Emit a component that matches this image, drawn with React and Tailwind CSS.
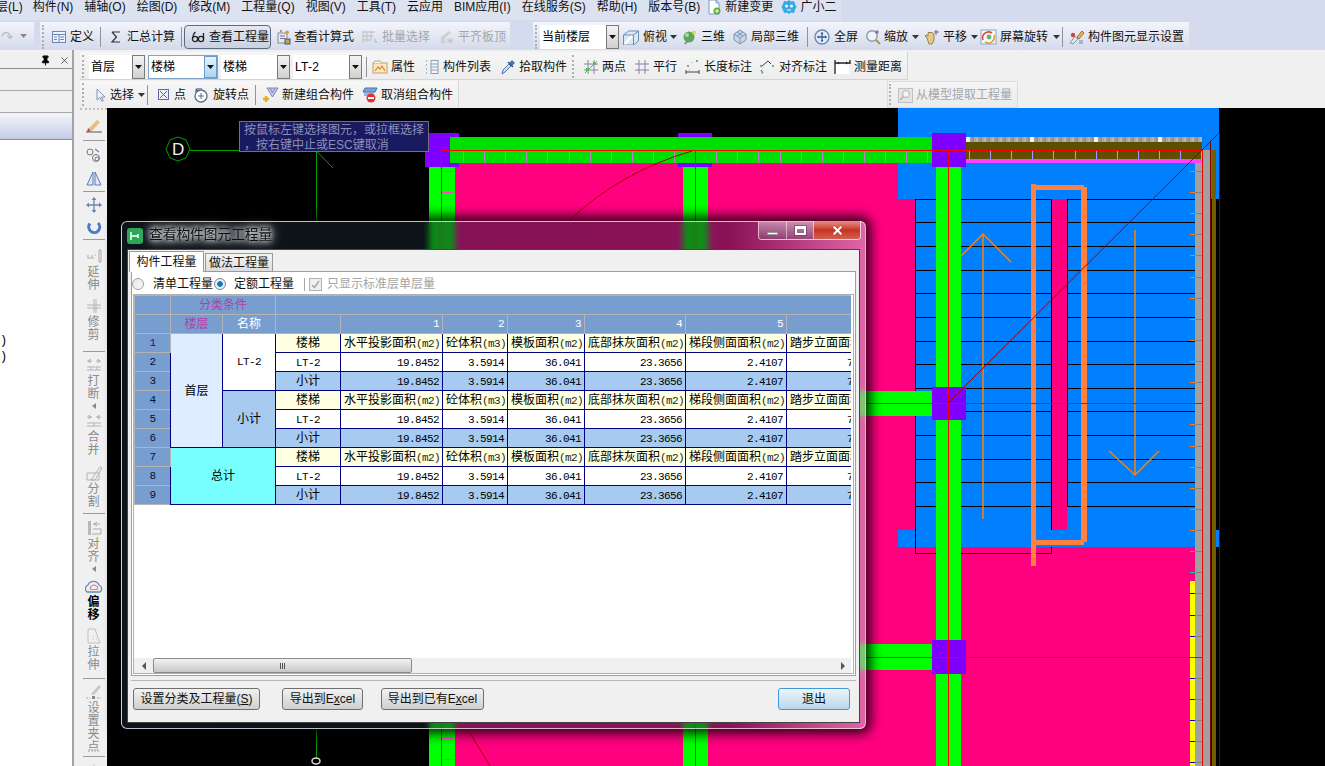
import React from 'react';
import { X, Pin } from 'lucide-react';

const mono = "font-['Liberation_Mono',monospace] text-[11px] tracking-[-0.6px] leading-none";

function Ico({ w = 16, children }) {
  return (
    <svg width={w} height={16} viewBox={`0 0 ${w} 16`} fill="none" className="shrink-0">
      {children}
    </svg>
  );
}

const icons = {
  define: <Ico><rect x="1.5" y="2.5" width="13" height="11" fill="#eef2fa" stroke="#6a86b8" /><path d="M2 5.5h12M8 6v7M9 8h4M9 10.5h4M3 8h3M3 10.5h3" stroke="#6a86b8" /></Ico>,
  sigma: <Ico><path d="M4 3h8M4 3l4.5 5L4 13h8" stroke="#333" strokeWidth="1.2" /></Ico>,
  glasses: <Ico><circle cx="5" cy="10" r="2.6" stroke="#222" strokeWidth="1.3" /><circle cx="11" cy="10" r="2.6" stroke="#222" strokeWidth="1.3" /><path d="M3 9c0-3 1-5 2.5-6M13.5 10V4" stroke="#222" strokeWidth="1.3" /></Ico>,
  calc: <Ico><rect x="3" y="4" width="9" height="10" fill="#e8e8f0" stroke="#889" /><path d="M5 7h5M5 9.5h5" stroke="#778" /><circle cx="12" cy="3.5" r="2" fill="#d9a03a" /><circle cx="6" cy="2" r="1.2" fill="#99a" /><rect x="10" y="10" width="5" height="5" fill="#e0a030" stroke="#2a5aa0" /></Ico>,
  batch: <Ico w={18}><path d="M2 2v12M2 3h12M2 7h10M2 11h8M6 3v10M10 3v8" stroke="#c4c8cc" strokeWidth="1.3" /><path d="M13 8l4 6h-3z" fill="#c8c8c8" /></Ico>,
  level: <Ico w={17}><path d="M3 14V8l8-6 2 2-6 5v5z" fill="#ccd0d0" /><rect x="9" y="9" width="6" height="5" fill="#d6d6d6" /><path d="M10 12h4" stroke="#bbb" /></Ico>,
  box: <Ico w={18}><path d="M1.5 6l5-4h10v10l-5 4h-10z" fill="#dce8f4" stroke="#6f8fb0" /><path d="M1.5 6h10v10M11.5 6l5-4" stroke="#6f8fb0" /><path d="M3 15l7-8" stroke="#fff" strokeWidth="2" /></Ico>,
  three: <Ico><circle cx="7" cy="8" r="5.5" fill="#58a858" /><circle cx="5" cy="6" r="2" fill="#a8dca0" /><path d="M3 15l4-5" stroke="#888" strokeWidth="2" /><circle cx="12" cy="3.5" r="2" fill="#e8d050" /></Ico>,
  partial: <Ico><path d="M8 1l6 4v6l-6 4-6-4V5z" fill="#c8d8ec" stroke="#7f94ad" /><path d="M2 5l6 4 6-4M8 9v6M5 3l6 4M11 3L5 7" stroke="#7f94ad" /></Ico>,
  full: <Ico w={18}><circle cx="9" cy="8" r="7" fill="#e4ecf8" stroke="#7088b0" strokeWidth="1.4" /><path d="M9 3.5v9M4.5 8h9" stroke="#3c5c98" strokeWidth="1.3" /><path d="M9 3l-1.5 2h3zM9 13l-1.5-2h3zM4 8l2-1.5v3zM14 8l-2-1.5v3z" fill="#3c5c98" /></Ico>,
  zoom: <Ico><circle cx="7" cy="7" r="5.2" fill="#f0f4fa" stroke="#8a9ab0" strokeWidth="1.4" /><path d="M11 11l4 4" stroke="#c09040" strokeWidth="2" /><path d="M12 1v4M10 3h4" stroke="#667" /></Ico>,
  hand: <Ico w={17}><path d="M4 9l-2-2 1-1 2 1V4l1-1 1 1 1-1 1 1 1 0 1 2v5l-2 4H6z" fill="#e8c888" stroke="#a08040" /><path d="M13 1v5M11 3h5" stroke="#667" /></Ico>,
  rotate: <Ico w={17}><rect x="1" y="1" width="15" height="14" fill="#f4f8fc" stroke="#7fa8d0" /><path d="M3 11a6 6 0 0 1 9-7" stroke="#e04a30" strokeWidth="1.6" /><path d="M14 6a6 6 0 0 1-9 7" stroke="#e0a030" strokeWidth="1.6" /><circle cx="9" cy="8" r="2.4" fill="#60b860" /></Ico>,
  settings: <Ico w={17}><path d="M2 14l5-7 3 3-5 5z" fill="#dfe4ec" stroke="#8a94a4" /><path d="M9 8l5-6 2 2-5 6z" fill="#e8b060" stroke="#a07030" /><circle cx="5" cy="6" r="2.2" fill="#c84a4a" /><path d="M11 12h4M11 14h4" stroke="#6888b8" /></Ico>,
  attr: <Ico><rect x="1" y="4" width="14" height="10" fill="#f8e8c4" stroke="#c8a060" /><path d="M1 4l2-2h5l2 2" fill="#fff4dc" stroke="#c8a060" /><path d="M3 12l3-4 2 2 2-3 3 5" stroke="#d88838" strokeWidth="1.2" /></Ico>,
  list: <Ico><path d="M2 2h2M2 6h2M2 10h2M2 14h2" stroke="#8aa0bc" strokeWidth="1.6" strokeDasharray="1 1" /><rect x="7" y="1.5" width="7" height="13" fill="#f4f6fa" stroke="#8aa0bc" /><path d="M7 5h7M7 8h7M7 11h7" stroke="#8aa0bc" /></Ico>,
  pick: <Ico><path d="M2 15l1-4 6-6 2 2-6 6z" fill="#cfe0f4" stroke="#4f74a8" /><path d="M9 4l3-3 3 3-3 3z" fill="#4f74a8" /><path d="M8 3l5 5" stroke="#2f548a" strokeWidth="1.3" /></Ico>,
  twoPts: <Ico><path d="M5 1v14M11 1v14M1 5h14M1 11h14" stroke="#8c80a8" /><path d="M2 14L14 2" stroke="#d86868" /><rect x="3" y="9" width="3" height="3" fill="#50c050" /><rect x="10" y="3" width="3" height="3" fill="#50c050" /></Ico>,
  parallel: <Ico><path d="M5 1v14M11 1v14M1 5h14M1 11h14" stroke="#8c80a8" /></Ico>,
  lenDim: <Ico><rect x="11" y="1" width="2" height="2" fill="#60c060" /><rect x="2" y="6" width="2" height="2" fill="#60c060" /><path d="M1 11v4M14 11v4M1 13h13" stroke="#444" /><path d="M7 3v1M4 11h1" stroke="#a8a8a8" /></Ico>,
  alignDim: <Ico w={17}><rect x="1" y="6" width="2" height="2" fill="#60c060" /><rect x="13" y="6" width="2" height="2" fill="#60c060" /><path d="M2 11l2 3M3 7l6-5 3 3" stroke="#444" /><path d="M2 14h2" stroke="#60c060" /></Ico>,
  measure: <Ico w={17}><rect x="2" y="2" width="13" height="13" fill="#fff" /><path d="M1 1v14M16 1v4M1 4h15" stroke="#222" strokeWidth="1.3" /><path d="M3 4l2-1.5v3zM14 4l-2-1.5v3z" fill="#222" /></Ico>,
  cursor: <Ico w={13}><path d="M3 2v11l3-2.5 2 4 1.5-1-2-3.5H11z" fill="#eef2f8" stroke="#8696ac" /></Ico>,
  point: <Ico w={14}><rect x="1.5" y="2.5" width="10" height="10" fill="#eef0fa" stroke="#5c68a8" /><path d="M3 4l7 7M10 4l-7 7" stroke="#a04868" /></Ico>,
  rotPt: <Ico w={17}><circle cx="8" cy="9" r="6" fill="#fff" stroke="#5a6a88" strokeWidth="1.3" /><path d="M8 6v6M5 9h6" stroke="#5a6a88" /><path d="M3 1l3 3-4 1z" fill="#5a6a88" /><path d="M4 1h5v2H4z" fill="#8898b0" /></Ico>,
  newGroup: <Ico w={17}><path d="M5 1h11l-5.5 9z" fill="#c4cce8" stroke="#7b86c0" /><path d="M8 1l2.500 5L13 1" stroke="#7b86c0" /><path d="M4 9v6M1 12h6" stroke="#e0b020" strokeWidth="2.400" /></Ico>,
  cancelGroup: <Ico><path d="M3 1h12l-2 4H1z" fill="#7aa4d8" stroke="#4a74b0" /><path d="M2 6h10M2 8h7" stroke="#7aa4d8" strokeWidth="1.500" /><circle cx="9" cy="11" r="4.500" fill="#e03030" /><rect x="6" y="10" width="6" height="2" fill="#fff" /></Ico>,
  modelPick: <Ico><rect x="1.500" y="1.500" width="14" height="14" fill="#e4e4e4" stroke="#c0c0c0" /><circle cx="9" cy="7" r="3.500" fill="#f4f4f4" stroke="#b0b0b0" /><path d="M6.500 9.500L3 13" stroke="#b0b0b0" strokeWidth="1.500" /></Ico>,
  change: <Ico><path d="M3 1h7l3 3v11H3z" fill="#fff" stroke="#7f9cc0" /><path d="M10 1v3h3" stroke="#7f9cc0" /><circle cx="11" cy="12" r="3.500" fill="#58b038" /><path d="M9 12h4M11 10v4" stroke="#fff" /></Ico>,
  face: <Ico><path d="M8 1l2 1.500 3-.5 1 3 1.500 3-1.500 3-1 3-3-.5-2 1.500-2-1.500-3 .5-1-3L.5 8 2 5l1-3 3 .5z" fill="#34a8e8" /><circle cx="5.500" cy="7" r="1.500" fill="#fff" /><circle cx="10.500" cy="7" r="1.500" fill="#fff" /><path d="M6 11h4" stroke="#fff" /></Ico>,
};

function Caret({ className = '', color = '#333' }) {
  return (
    <svg width="7" height="4" viewBox="0 0 7 4" className={`shrink-0 ${className}`}>
      <path d="M0 0h7L3.500 4z" fill={color} />
    </svg>
  );
}

function Sep({ className = '' }) {
  return <div className={`w-px h-[20px] bg-[#8c929e] shrink-0 ${className}`} />;
}

function Grip({ className = '' }) {
  return <div className={`h-full border-l-2 border-dotted border-[#b0b0b0] shrink-0 ${className}`} />;
}

function Tool({ icon, label, className = '', muted }) {
  return (
    <div className={`flex items-center gap-[3px] shrink-0 ${muted ? 'text-[#a2a6ac]' : 'text-[#111]'} ${className}`}>
      {icon}
      <span className="whitespace-nowrap">{label}</span>
    </div>
  );
}

function Select({ value, className = '', focus, mono: isMono }) {
  return (
    <div className={`flex h-[24px] bg-white shrink-0 ${focus ? 'border border-[#7fa4c8]' : ''} ${className}`}>
      <span className={`flex-1 pl-[2px] whitespace-nowrap overflow-hidden ${focus ? 'leading-[22px]' : 'leading-[24px]'} ${isMono ? 'tracking-[0.3px]' : ''}`}>{value}</span>
      <div className={`w-[13px] flex items-center justify-center border ${focus ? 'border-[#6f9cc8] bg-gradient-to-b from-[#e4f3fc] to-[#a9d6f0]' : 'border-[#7a7a7a] bg-gradient-to-b from-[#f4f4f4] to-[#d0d0d0]'}`}>
        <Caret color="#111" />
      </div>
    </div>
  );
}

function VTool({ icon, label, muted, bold, caret, className = '' }) {
  return (
    <div className={`flex flex-col items-center shrink-0 ${className}`}>
      {icon}
      {label && (
        <div className={`w-3 mt-[2px] leading-[13px] text-center break-all ${muted ? 'text-[#8a8a8a]' : 'text-black'} ${bold ? 'font-bold' : ''}`}>
          {label}
        </div>
      )}
      {caret && <div className="mt-[2px] border-y-[3px] border-y-transparent border-r-[4px] border-r-[#888]" />}
    </div>
  );
}

function VSep({ className = '' }) {
  return <div className={`w-[22px] h-px bg-[#9a9a9a] shrink-0 ${className}`} />;
}

function Menu() {
  const items = ['构件(N)', '辅轴(O)', '绘图(D)', '修改(M)', '工程量(Q)', '视图(V)', '工具(T)', '云应用', 'BIM应用(I)', '在线服务(S)', '帮助(H)', '版本号(B)'];
  return (
    <div className="h-[22px] bg-[#d5dbee] flex items-start shrink-0">
      <div className="h-[20px] w-[841px] flex items-center pb-[6px] bg-[#dde2f1] text-[#111] shrink-0">
        <span className="-ml-[16px] mr-[10px] whitespace-nowrap">楼层(L)</span>
        <div className="flex gap-[11px]">
          {items.map((m) => <span key={m} className="whitespace-nowrap">{m}</span>)}
        </div>
        <Tool icon={icons.change} label="新建变更" className="ml-[6px]" />
        <Tool icon={icons.face} label="广小二" className="ml-[8px]" />
      </div>
    </div>
  );
}

function Row1() {
  const bar = 'h-[28px] flex items-center bg-gradient-to-b from-[#f3f5fb] to-[#d4daeb] shrink-0';
  return (
    <div className="h-[28px] bg-[#d5dbee] flex shrink-0 border-b-0">
      <div className={`${bar} w-[34px] pl-[1px] gap-[4px]`}>
        <span className="text-[#b8bcc4] text-[15px] leading-none w-[15px]">↷</span>
        <Caret color="#888" />
      </div>
      <div className={`${bar} w-[470px] ml-[6px] pt-[3px] pb-px`}>
        <Grip className="ml-[2px]" />
        <Tool icon={icons.define} label="定义" className="ml-[7px]" />
        <Sep className="ml-[6px]" />
        <Tool icon={icons.sigma} label="汇总计算" className="ml-[7px]" />
        <Sep className="ml-[6px]" />
        <Tool icon={icons.glasses} label="查看工程量" className="ml-[2px] h-[24px] w-[87px] pl-[5px] gap-[2px] border border-[#5a6a80] rounded-[4px] bg-gradient-to-b from-[#e4e8f2] to-[#c9d0e0]" />
        <Tool icon={icons.calc} label="查看计算式" className="ml-[4px]" />
        <Tool icon={icons.batch} label="批量选择" className="ml-[7px] gap-[1px]" muted />
        <Tool icon={icons.level} label="平齐板顶" className="ml-[8px]" muted />
      </div>
      <div className={`${bar} w-[656px] ml-[23px] pt-[3px] pb-px`}>
        <Grip className="ml-[2px]" />
        <Select value="当前楼层" className="ml-[3px] w-[79px]" />
        <Tool icon={icons.box} label="俯视" className="ml-[3px]" />
        <Caret className="ml-[3px]" />
        <Tool icon={icons.three} label="三维" className="ml-[5px]" />
        <Tool icon={icons.partial} label="局部三维" className="ml-[7px]" />
        <Sep className="ml-[8px]" />
        <Tool icon={icons.full} label="全屏" className="ml-[5px]" />
        <Tool icon={icons.zoom} label="缩放" className="ml-[7px]" />
        <Caret className="ml-[4px]" />
        <Tool icon={icons.hand} label="平移" className="ml-[4px]" />
        <Caret className="ml-[4px]" />
        <Tool icon={icons.rotate} label="屏幕旋转" className="ml-[2px]" />
        <Caret className="ml-[5px]" />
        <Sep className="ml-[2px]" />
        <Tool icon={icons.settings} label="构件图元显示设置" className="ml-[5px]" />
      </div>
    </div>
  );
}

function Row2() {
  return (
    <div className="h-[28px] w-[828px] flex items-center pt-[3px] pb-px bg-gradient-to-b from-[#f6f6f6] to-[#ededed] border-b border-r border-[#d4d4d4] shrink-0">
      <Grip className="ml-[2px]" />
      <Select value="首层" className="ml-[5px] w-[56px]" />
      <Select value="楼梯" className="ml-[3px] w-[70px]" focus />
      <Select value="楼梯" className="ml-[3px] w-[69px]" />
      <Select value="LT-2" className="ml-[3px] w-[69px]" mono />
      <Sep className="ml-[4px]" />
      <Tool icon={icons.attr} label="属性" className="ml-[5px]" />
      <Tool icon={icons.list} label="构件列表" className="ml-[9px]" />
      <Tool icon={icons.pick} label="拾取构件" className="ml-[9px]" />
      <Grip className="ml-[5px]" />
      <Tool icon={icons.twoPts} label="两点" className="ml-[9px]" />
      <Tool icon={icons.parallel} label="平行" className="ml-[8px]" />
      <Tool icon={icons.lenDim} label="长度标注" className="ml-[8px]" />
      <Tool icon={icons.alignDim} label="对齐标注" className="ml-[7px]" />
      <Tool icon={icons.measure} label="测量距离" className="ml-[7px]" />
    </div>
  );
}

function Row3() {
  return (
    <div className="h-[27px] flex shrink-0">
      <div className="w-[379px] flex items-center py-[2px] bg-gradient-to-b from-[#f6f6f6] to-[#ededed] border-r border-[#d8d8d8]">
        <Grip className="ml-[2px]" />
        <Tool icon={icons.cursor} label="选择" className="ml-[10px]" />
        <Caret className="ml-[4px]" />
        <Sep className="ml-[2px]" />
        <Tool icon={icons.point} label="点" className="ml-[9px]" />
        <Tool icon={icons.rotPt} label="旋转点" className="ml-[7px]" />
        <Sep className="ml-[6px]" />
        <Tool icon={icons.newGroup} label="新建组合构件" className="ml-[6px]" />
        <Tool icon={icons.cancelGroup} label="取消组合构件" className="ml-[8px]" />
      </div>
      <div className="w-[131px] ml-[428px] flex items-center py-[2px] bg-gradient-to-b from-[#f4f4f4] to-[#ebebeb] border border-[#dcdcdc]">
        <Grip className="ml-[1px]" />
        <Tool icon={icons.modelPick} label="从模型提取工程量" className="ml-[6px]" muted />
      </div>
    </div>
  );
}

function LeftPanel() {
  return (
    <div className="w-[74px] shrink-0 flex flex-col border-r-2 border-[#a0a4a8] bg-[#f0f0f0] pt-[3px]">
      <div className="h-[16px] flex items-center justify-end gap-[8px] pr-[2px] border-b border-[#8a8a8a]">
        <Pin size={11} strokeWidth={2} className="text-black" fill="black" />
        <X size={11} strokeWidth={1.300} className="text-black" />
      </div>
      <div className="h-[22px] border-b border-[#a8a8a8]" />
      <div className="h-[22px] border-b border-[#a8a8a8]" />
      <div className="h-[26px] mt-px bg-gradient-to-b from-[#f2f4fa] to-[#c4cce4] border-b border-[#8a8e96]" />
      <div className="flex-1 bg-white pt-[193px] font-['Liberation_Mono',monospace] text-[12px] leading-[16px] text-black">
        <div>)</div>
        <div>)</div>
      </div>
    </div>
  );
}

function VerticalBar() {
  const g = (cls, body) => <svg width="18" height="16" viewBox="0 0 18 16" fill="none" className={`shrink-0 ${cls}`}>{body}</svg>;
  return (
    <div className="w-[27px] shrink-0 flex flex-col items-center bg-[#f0f0f0] overflow-hidden text-xs border-t-2 border-dotted border-t-[#c0c0c0]">
      <VTool className="mt-[7px]" icon={g('', <><path d="M3 12l9-9 3 2-8 9z" fill="#e8c070" /><path d="M3 11l3 3-4 1z" fill="#b84878" /><path d="M1 15h16" stroke="#555" /></>)} />
      <VSep className="mt-[7px]" />
      <VTool className="mt-[6px]" icon={g('', <><circle cx="5" cy="5" r="3" stroke="#778" /><circle cx="11" cy="11" r="3.500" stroke="#778" /><circle cx="12" cy="12" r="2" stroke="#778" /><path d="M10 2l4 3" stroke="#6a88c0" strokeWidth="1.300" /></>)} />
      <VTool className="mt-[7px]" icon={g('', <><path d="M8 2v13L2 15zM10 2v13l6 0z" fill="#dce6f6" stroke="#5c7cb0" /></>)} />
      <VSep className="mt-[5px]" />
      <VTool className="mt-[5px]" icon={g('', <><path d="M9 1v14M2 8h14" stroke="#6a88a8" strokeWidth="1.300" /><path d="M9 0l-2.500 3h5zM9 16l-2.500-3h5zM1 8l3-2.500v5zM17 8l-3-2.500v5z" fill="#6a88a8" /></>)} />
      <VTool className="mt-[5px]" icon={g('', <path d="M13 5a5.500 5.500 0 1 1-8 .5" stroke="#4a7ac8" strokeWidth="3" />)} />
      <VSep className="mt-[5px]" />
      <VTool className="mt-[8px]" muted label="延伸" icon={g('', <path d="M2 8h2M6 8h2M2 10h7M10 7h1M14 2v12M16 2v12M14 2h2M14 14h2" stroke="#aaa" />)} />
      <VTool className="mt-[6px]" muted label="修剪" icon={g('', <path d="M2 7h14M2 10h14M9 1v14M11 1v14" stroke="#b4b4b4" />)} />
      <VSep className="mt-[9px]" />
      <VTool className="mt-[5px]" muted label="打断" caret icon={g('', <path d="M2 4h5M11 4h5M2 10h14M2 13h14M6 10v3M12 10v3M3 4l2-2v4zM15 4l-2-2v4z" stroke="#b4b4b4" />)} />
      <VTool className="mt-[4px]" muted label="合并" icon={g('', <path d="M2 4h5M11 4h5M2 10h14M2 13h14M9 10v3M6 4L4 2v4zM12 4l2-2v4z" stroke="#b4b4b4" />)} />
      <VTool className="mt-[8px]" muted label="分割" icon={g('', <path d="M2 8h12v7H2zM6 15l9-13 2 1-7 12z" stroke="#b4b4b4" />)} />
      <VSep className="mt-[4px]" />
      <VTool className="mt-[6px]" muted label="对齐" caret icon={g('', <><rect x="3" y="1" width="3" height="14" fill="#b8b8b8" /><path d="M8 4h7M8 9h8v5H7M12 2l-3 2 3 2" stroke="#aaa" /></>)} />
      <VTool className="mt-[6px]" bold label="偏移" icon={g('', <><path d="M2 14a4 4 0 0 1 1-7 6 6 0 0 1 11 0 4 4 0 0 1 1 7z" stroke="#5c8cc0" strokeWidth="1.300" /><path d="M6 11.500a2 2 0 0 1 1-3.500 2.500 2.500 0 0 1 4 0 2 2 0 0 1 1 3.500z" stroke="#e08080" strokeWidth="1.200" /></>)} />
      <VTool className="mt-[6px]" muted label="拉伸" icon={g('', <path d="M3 1h7l5 14H3zM8 8h1M8 11h1M11 11h1" stroke="#c0c0c0" />)} />
      <VSep className="mt-[6px]" />
      <VTool className="mt-[5px]" muted label="设置夹点" icon={g('', <><path d="M6 10l8-9 2 2-7 8z" fill="#c8c8c8" /><path d="M1 14h4M12 14h4" stroke="#aaa" strokeDasharray="2 1" /><rect x="7" y="12" width="3" height="3" fill="#888" /></>)} />
      <VSep className="mt-[2px]" />
      <VTool className="mt-[5px]" icon={g('', <path d="M2 8h14M9 2v12" stroke="#c8c8c8" strokeDasharray="2 1" />)} />
    </div>
  );
}

function Canvas() {
  const ticks = Array.from({ length: 29 }, (_, k) => 171 + k * 21.120);
  const beam = Array.from({ length: 23 }, (_, k) => 463 + k * 21.100);
  const strip = Array.from({ length: 12 }, (_, k) => 969 + k * 21.100);
  const speck = Array.from({ length: 118 }, (_, k) => 966 + k * 2);
  const stairs = [199, 222, 246, 270, 293, 317, 341, 364, 388, 411, 435, 459, 482, 506];
  const shades = ['#b0a8a0', '#989084', '#c0bcb8', '#a49c90', '#8c8478', '#b8b4ac', '#a89f94'];
  return (
    <div className="relative w-[1218px] h-[658px] bg-black shrink-0">
      <svg className="block" width="1218" height="658" viewBox="107 108 1218 658" shapeRendering="crispEdges">
        <rect x="898" y="108" width="321" height="91" fill="#0080ff" />
        <rect x="455" y="163" width="460" height="603" fill="#ff007f" />
        <rect x="915" y="547" width="280" height="219" fill="#ff007f" />
        <rect x="915" y="199" width="280" height="348" fill="#0080ff" />
        <rect x="898" y="530" width="17" height="17" fill="#0080ff" />
        <rect x="1216" y="530" width="3" height="17" fill="#0080ff" />
        <rect x="898" y="163" width="17" height="36" fill="#0080ff" />
        <rect x="1051" y="199" width="16" height="331" fill="#ff007f" />

        {/* stair treads */}
        {stairs.map((y) => (
          <g key={y} stroke="#000">
            <path d={`M915 ${y + 0.500}H1051`} />
            <path d={`M1067 ${y + 0.500}H1195`} />
          </g>
        ))}
        <path d="M915.500 199V553.500H1051.500V547M1051.500 530V199M1067.500 199V506" stroke="#000" fill="none" />

        {/* stair outline and arrows */}
        <g fill="#ff8040">
          <rect x="1031" y="184" width="5" height="382" />
          <rect x="1081" y="187" width="6" height="355" />
          <rect x="1036" y="185" width="48" height="5" />
          <rect x="1036" y="540" width="48" height="5" />
        </g>
        <g stroke="#ff8000" fill="none" strokeWidth="1.500" shapeRendering="auto">
          <path d="M983 235V519M961 256L983 234L1011 262" />
          <path d="M1135 230V475M1109 451L1135 475L1159 451" />
        </g>

        {/* columns */}
        <rect x="429" y="167" width="26" height="599" fill="#00ff00" />
        <rect x="683" y="163" width="25" height="603" fill="#00ff00" />
        <rect x="936" y="167" width="25" height="599" fill="#00ff00" />
        <rect x="708" y="391" width="228" height="25" fill="#00ff00" />
        <rect x="708" y="644" width="228" height="26" fill="#00ff00" />

        {/* top beam */}
        <rect x="429" y="133" width="30" height="34" fill="#8000ff" />
        <rect x="425" y="150" width="34" height="17" fill="#8000ff" />
        <rect x="678" y="133" width="34" height="34" fill="#8000ff" />
        <rect x="450" y="137" width="482" height="26" fill="#00e000" />
        {beam.map((x) => <rect key={x} x={x} y="150" width="1" height="13" fill="#c080c0" />)}
        <rect x="966" y="142" width="236" height="17" fill="#5c5000" />
        <rect x="966" y="159" width="236" height="4" fill="#ff40ff" />
        {speck.map((x, k) => <rect key={x} x={x} y="137" width="2" height="5" fill={k % 32 < 2 ? '#f0f0f0' : shades[(k * 5 + (k >> 2)) % 7]} />)}
        {strip.map((x) => <rect key={x} x={x} y="150" width="1" height="9" fill="#a0a0ff" />)}
        <rect x="932" y="133" width="34" height="34" fill="#8000ff" />
        <rect x="932" y="387" width="34" height="33" fill="#8000ff" />
        <rect x="932" y="640" width="34" height="34" fill="#8000ff" />

        {/* right edge strips */}
        <rect x="1195" y="163" width="15" height="603" fill="#a0a0a0" />
        <rect x="1202" y="150" width="8" height="13" fill="#a0a0a0" />
        <rect x="1212" y="150" width="4" height="616" fill="#706000" />
        <rect x="1190" y="581" width="5" height="185" fill="#ffff00" />
        {ticks.map((y, k) => (
          <g key={y}>
            <rect x="1190" y={Math.round(y)} width="5" height="1" fill={k < 18 ? '#ff8000' : k < 20 ? '#00e0a0' : '#0000c0'} />
            <rect x="1195" y={Math.round(y)} width="7" height="1" fill="#808080" />
          </g>
        ))}

        {/* axis lines */}
        <g stroke="#ff0000" fill="none">
          <path d="M441 150.500H1203M450 403.500H1203M708 657.500H1203" />
          <path d="M441.500 150V766M695.500 150V766M948.500 150V766M1202.500 150V766" />
        </g>
        {[0, 1, 2, 27, 28].map((k) => (
          <g key={k} fill="#ff40c0">
            <rect x="442" y={171 + k * 21} width="12" height="1" />
          </g>
        ))}
        <path d="M1210.500 141V766M1219.500 133V766" stroke="#800000" />
        <path d="M948 403L1219 133" stroke="#a00000" shapeRendering="auto" />
        <path d="M570 220Q620 172 692 151" stroke="#a00000" fill="none" shapeRendering="auto" />
        <path d="M470 733L490 766" stroke="#a00000" shapeRendering="auto" />

        {/* axis bubble D */}
        <g stroke="#00a000" fill="none" shapeRendering="auto">
          <path d="M178 137L186 140L190 149L186 158L178 161L170 158L166 149L170 140Z" />
          <path d="M190 150.500H239M316.500 151V222M316.500 151L333 168M316.500 729V757" />
        </g>
        <ellipse cx="316" cy="761" rx="4" ry="3" fill="none" stroke="#ddd" strokeWidth="1.500" shapeRendering="auto" />
        <text x="172" y="155" fill="#eee" fontSize="17" fontFamily="Liberation Sans">D</text>
      </svg>
      <div className="absolute left-[132px] top-[13px] w-[190px] h-[31px] bg-[#1a1a60] border border-[#707084] pl-[4px] pt-px text-[#8f8fb4] leading-[15px] whitespace-nowrap">
        <div>按鼠标左键选择图元，或拉框选择</div>
        <div>，按右键中止或ESC键取消</div>
      </div>
    </div>
  );
}

const cols = ['w-[36px]', 'w-[52px]', 'w-[53px]', 'w-[65px]', 'w-[102px]', 'w-[65px]', 'w-[77px]', 'w-[101px]', 'w-[101px]', 'w-[100px]'];
const labels = ['水平投影面积', '砼体积', '模板面积', '底部抹灰面积', '梯段侧面面积', '踏步立面面积'];
const units = ['(m2)', '(m3)', '(m2)', '(m2)', '(m2)', '(m2)'];
const values = ['19.8452', '3.5914', '36.041', '23.3656', '2.4107', '7.2321'];

function GridRow({ i }) {
  const kind = i % 3;
  const bg = kind === 0 ? 'bg-[#ffffe1]' : kind === 1 ? 'bg-white' : 'bg-[#a6caf0]';
  const cell = 'border border-[#000080] p-0 overflow-hidden whitespace-nowrap';
  return (
    <tr className="h-[19px]">
      <td className={`border border-[#b4b4b4] bg-[#789ed0] text-center ${mono} ${i === 0 ? 'text-[#400080]' : 'text-[#001040]'}`}>{i + 1}</td>
      {i === 0 && <td rowSpan={6} className={`${cell} bg-[#deedff] text-center`}>首层</td>}
      {i === 6 && <td rowSpan={3} colSpan={2} className={`${cell} bg-[#77ffff] text-center`}>总计</td>}
      {i === 0 && <td rowSpan={3} className={`${cell} bg-white text-center ${mono}`}>LT-2</td>}
      {i === 3 && <td rowSpan={3} className={`${cell} bg-[#a6caf0] text-center`}>小计</td>}
      <td className={`${cell} ${bg} text-center`}>
        {kind === 0 ? '楼梯' : kind === 1 ? <span className={mono}>LT-2</span> : '小计'}
      </td>
      {values.map((v, c) => (
        <td key={c} className={`${cell} ${bg} ${kind === 0 ? 'pl-[3px] text-left' : 'pr-[3px] text-right'}`}>
          {kind === 0 ? <>{labels[c]}<span className={`${mono} text-[#222]`}>{units[c]}</span></> : <span className={mono}>{v}</span>}
        </td>
      ))}
    </tr>
  );
}

function Grid() {
  const hd = 'border border-[#b4b4b4] bg-[#789ed0] p-0';
  return (
    <div className="w-[717px] h-[363px] overflow-hidden bg-white">
      <table className="table-fixed border-collapse w-[752px] text-xs leading-[14px] text-black">
        <colgroup>{cols.map((c, k) => <col key={k} className={c} />)}</colgroup>
        <tbody>
          <tr className="h-[19px]">
            <td className={hd} />
            <td colSpan={2} className={`${hd} text-center text-[#b040a8]`}>分类条件</td>
            <td colSpan={7} className={hd} />
          </tr>
          <tr className="h-[19px]">
            <td className={hd} />
            <td className={`${hd} text-center text-[#b040a8]`}>楼层</td>
            <td className={`${hd} text-center text-white`}>名称</td>
            <td className={hd} />
            {[1, 2, 3, 4, 5, 6].map((n) => <td key={n} className={`${hd} text-right pr-[3px] text-white ${mono}`}>{n}</td>)}
          </tr>
          {Array.from({ length: 9 }, (_, i) => <GridRow key={i} i={i} />)}
        </tbody>
      </table>
    </div>
  );
}

function Scrollbar() {
  return (
    <div className="h-[15px] w-[717px] flex items-center bg-[#f0f0f0]">
      <div className="w-[19px] flex justify-center"><div className="border-y-[4px] border-y-transparent border-r-[4px] border-r-[#555]" /></div>
      <div className="w-[259px] h-[15px] flex items-center justify-center gap-px rounded-[2px] border border-[#8a8a8a] bg-gradient-to-b from-[#f2f2f2] to-[#c8c8c8]">
        <i className="w-px h-[6px] bg-[#555]" /><i className="w-px h-[6px] bg-[#555]" /><i className="w-px h-[6px] bg-[#555]" />
      </div>
      <div className="flex-1" />
      <div className="w-[16px] flex justify-center"><div className="border-y-[4px] border-y-transparent border-l-[4px] border-l-[#555]" /></div>
    </div>
  );
}

function DlgButton({ className = '', children, primary }) {
  return (
    <div className={`h-[22px] flex items-center justify-center shrink-0 rounded-[3px] border text-[#111] ${primary ? 'border-[#3c9ad8] bg-gradient-to-b from-[#ecf6fc] to-[#bcd6e8]' : 'border-[#707070] bg-gradient-to-b from-[#f2f2f2] to-[#cfcfcf]'} ${className}`}>
      {children}
    </div>
  );
}

function Dialog() {
  return (
    <div className="absolute left-[121px] top-[221px] w-[745px] h-[508px] rounded-[6px] border border-[#e8e8e8]/80 px-[5px] pb-[5px] flex flex-col backdrop-blur-[3px] bg-[linear-gradient(90deg,rgba(24,36,48,0.55),rgba(24,36,48,0.5)_82%,rgba(205,170,195,0.6))] shadow-[0_0_12px_5px_rgba(0,0,0,0.8)] text-xs">
      <div className="h-[27px] flex items-center shrink-0 relative">
        <div className="w-[16px] h-[16px] rounded-[3px] bg-[#2aa858] flex items-center justify-center">
          <svg width="12" height="12" viewBox="0 0 12 12"><path d="M2 2v8M2 6h7M9 4v4" stroke="#fff" strokeWidth="1.500" fill="none" /></svg>
        </div>
        <span className="ml-[6px] text-[13.700px] text-[#111] [text-shadow:0_0_5px_#fff,0_0_9px_#fff,0_0_13px_rgba(255,255,255,0.9)]">查看构件图元工程量</span>
        <div className="absolute -right-[1px] -top-px h-[19px] w-[103px] flex rounded-b-[4px] border border-t-0 border-white/70 overflow-hidden">
          <div className="w-[28px] flex items-center justify-center bg-gradient-to-b from-[#d8b8cc]/70 to-[#804870]/60 border-r border-white/50">
            <div className="w-[11px] h-[3px] mt-[6px] bg-white border border-[#333]/50" />
          </div>
          <div className="w-[27px] flex items-center justify-center bg-gradient-to-b from-[#d8b8cc]/70 to-[#804870]/60 border-r border-white/50">
            <div className="w-[11px] h-[9px] border-2 border-t-[3px] border-white outline outline-[#333]/40" />
          </div>
          <div className="flex-1 flex items-center justify-center bg-gradient-to-b from-[#e49088] via-[#c83020] to-[#d06050]">
            <X size={13} strokeWidth={3.500} className="text-white" />
          </div>
        </div>
      </div>
      <div className="flex-1 flex flex-col bg-[#f0f0f0] border border-[#444] px-[3px] min-h-0 relative">
        <div className="h-[22px] flex items-end shrink-0 relative z-10 -mb-px -ml-[2px]">
          <div className="w-[75px] h-[21px] bg-white border border-b-0 border-[#999] text-center leading-[20px] text-[#111]">构件工程量</div>
          <div className="w-[68px] h-[19px] ml-px bg-gradient-to-b from-[#f4f4f4] to-[#dcdcdc] border border-[#999] text-center leading-[19px] text-[#111]">做法工程量</div>
        </div>
        <div className="h-[405px] bg-white border border-[#a0a0a0] shrink-0 flex flex-col pt-[3px]">
          <div className="h-[18px] flex items-center shrink-0 text-[#111]">
            <div className="w-[12px] h-[12px] rounded-full border border-[#a0a0a0] bg-gradient-to-br from-[#e8e8e8] to-[#fafafa]" />
            <span className="ml-[9px] leading-none whitespace-nowrap">清单工程量</span>
            <div className="w-[12px] h-[12px] ml-[1px] rounded-full border border-[#808890] bg-[radial-gradient(circle,#0a78c8_35%,#e8f0f4_45%)]" />
            <span className="ml-[8px] whitespace-nowrap">定额工程量</span>
            <div className="ml-[10px] w-px h-[13px] bg-[#a8a8a8]" />
            <div className="ml-[4px] w-[13px] h-[13px] border border-[#b0b0b0] bg-[#f0f0f0] flex items-center justify-center">
              <svg width="9" height="9" viewBox="0 0 9 9"><path d="M1 5l2.500 2.500L8 1" stroke="#a8a8a8" strokeWidth="1.500" fill="none" /></svg>
            </div>
            <span className="ml-[5px] text-[#a4a4a4] whitespace-nowrap">只显示标准层单层量</span>
          </div>
          <div className="ml-[1px] mt-[1px] mr-px border border-[#b0b0b0] flex flex-col">
            <Grid />
            <Scrollbar />
          </div>
        </div>
        <div className="mt-[4px] h-px bg-[#b8b8b8] shrink-0" />
        <div className="flex items-center mt-[7px] pl-[2px] shrink-0">
          <DlgButton className="w-[127px]">设置分类及工程量(<u>S</u>)</DlgButton>
          <DlgButton className="w-[81px] ml-[22px]">导出到E<u>x</u>cel</DlgButton>
          <DlgButton className="w-[103px] ml-[18px]">导出到已有E<u>x</u>cel</DlgButton>
          <DlgButton className="w-[72px] ml-auto mr-[6px]" primary>退出</DlgButton>
        </div>
      </div>
    </div>
  );
}

export default function App() {
  return (
    <div className="relative w-[1325px] h-[766px] overflow-hidden flex flex-col bg-[#f0f0f0] text-xs font-['Liberation_Sans','Noto_Sans_CJK_SC',sans-serif]">
      <Menu />
      <Row1 />
      <div className="flex-1 flex min-h-0">
        <LeftPanel />
        <div className="flex-1 flex flex-col pl-[6px] pt-[2px] min-w-0">
          <Row2 />
          <div className="h-px shrink-0" />
          <Row3 />
          <div className="flex-1 flex min-h-0">
            <VerticalBar />
            <Canvas />
          </div>
        </div>
      </div>
      <Dialog />
    </div>
  );
}
